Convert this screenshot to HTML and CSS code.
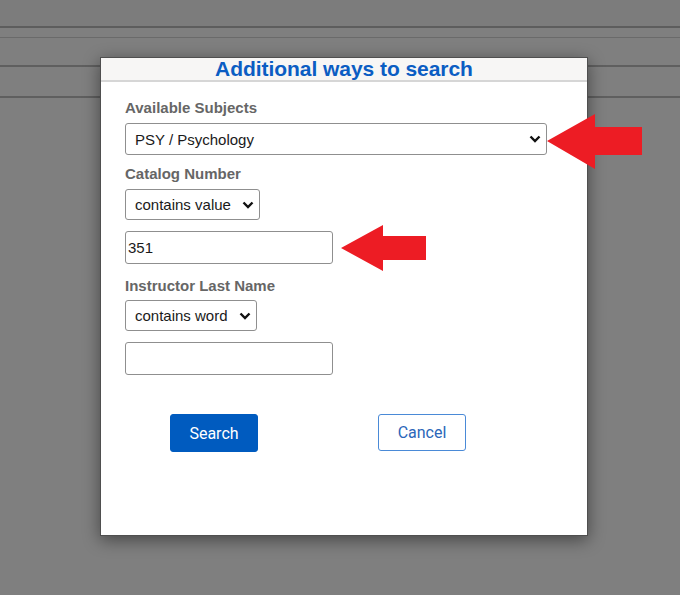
FILE: index.html
```html
<!DOCTYPE html>
<html>
<head>
<meta charset="utf-8">
<link rel="stylesheet" href="styles.css">
</head>
<body>
<div class="page">
  <div class="band band-top"></div>
  <div class="band band-thin"></div>
  <div class="band band-mid"></div>
  <div class="band band-low"></div>
</div>

<div class="modal">
  <div class="modal-header">Additional ways to search</div>
  <div class="modal-body">
    <label class="field-label">Available Subjects</label>
    <div class="select-wrap subject">
      <select class="select"><option>PSY / Psychology</option></select>
      <svg class="chev" viewBox="0 0 12 8"><path d="M1.5 1.5 L6 6 L10.5 1.5" fill="none" stroke="#111" stroke-width="2.4"/></svg>
    </div>

    <label class="field-label gap-top">Catalog Number</label>
    <div class="select-wrap op-value">
      <select class="select"><option>contains value</option></select>
      <svg class="chev" viewBox="0 0 12 8"><path d="M1.5 1.5 L6 6 L10.5 1.5" fill="none" stroke="#111" stroke-width="2.4"/></svg>
    </div>
    <input class="text-input" type="text" value="351">

    <label class="field-label gap-top2 tight">Instructor Last Name</label>
    <div class="select-wrap op-word">
      <select class="select"><option>contains word</option></select>
      <svg class="chev" viewBox="0 0 12 8"><path d="M1.5 1.5 L6 6 L10.5 1.5" fill="none" stroke="#111" stroke-width="2.4"/></svg>
    </div>
    <input class="text-input" type="text" value="">

    <div class="actions">
      <button class="btn btn-primary">Search</button>
      <button class="btn btn-outline">Cancel</button>
    </div>
  </div>
</div>

<svg class="annotations" width="680" height="595" viewBox="0 0 680 595">
  <polygon fill="#ed1c24" points="547,141 595,114 595,127 642,127 642,155 595,155 595,169"/>
  <polygon fill="#ed1c24" points="341,248 383,225 383,236 426,236 426,260 383,260 383,271"/>
</svg>
</body>
</html>
```

FILE: styles.css
```css
html, body {
  margin: 0;
  padding: 0;
}
body {
  width: 680px;
  height: 595px;
  overflow: hidden;
  background: #7f7f7f;
  font-family: "Liberation Sans", Arial, sans-serif;
  position: relative;
}
.page {
  display: flex;
  flex-direction: column;
}
.band {
  box-sizing: border-box;
}
.band-top {
  height: 28px;
  border-bottom: 2px solid #5d5d5d;
  background: #7c7c7c;
}
.band-thin {
  height: 10px;
  border-bottom: 1px solid #6a6a6a;
}
.band-mid {
  height: 29px;
  border-bottom: 2px solid #5f5f5f;
}
.band-low {
  height: 31px;
  border-bottom: 2px solid #5f5f5f;
}

.modal {
  position: absolute;
  left: 100px;
  top: 57px;
  width: 488px;
  height: 479px;
  box-sizing: border-box;
  background: #fff;
  border: 1px solid #4f4f4f;
  box-shadow: 0 4px 16px rgba(0, 0, 0, 0.45);
}
.modal-header {
  height: 22px;
  line-height: 22px;
  background: #f7f6f5;
  border-bottom: 2px solid #d6d6d6;
  text-align: center;
  font-weight: bold;
  font-size: 21px;
  color: #0b5dc3;
  letter-spacing: -0.05px;
}
.modal-body {
  padding: 17px 0 0 24px;
  display: flex;
  flex-direction: column;
  align-items: flex-start;
}
.field-label {
  display: block;
  font-size: 15px;
  line-height: 18px;
  font-weight: bold;
  color: #666;
  margin-bottom: 6px;
}
.gap-top {
  margin-top: 10px;
}
.gap-top2 {
  margin-top: 13px;
}
.field-label.tight {
  margin-bottom: 5px;
}
.select-wrap {
  position: relative;
  height: 31px;
}
.select-wrap.subject { width: 422px; height: 32px; }
.select-wrap.op-value { width: 135px; }
.select-wrap.op-word { width: 132px; }
.select {
  -webkit-appearance: none;
  appearance: none;
  width: 100%;
  height: 100%;
  box-sizing: border-box;
  border: 1px solid #8f8f8f;
  border-radius: 3px;
  background: #fff;
  font-family: "Liberation Sans", Arial, sans-serif;
  font-size: 15px;
  color: #1a1a1a;
  padding: 0 0 0 9px;
  margin: 0;
}
.chev {
  position: absolute;
  width: 12px;
  height: 8px;
  right: 6px;
  top: 50%;
  margin-top: -4px;
  pointer-events: none;
}
.text-input {
  box-sizing: border-box;
  width: 208px;
  height: 33px;
  margin: 11px 0 0 0;
  border: 1px solid #8f8f8f;
  border-radius: 3px;
  padding: 0 2px;
  font-family: "Liberation Sans", Arial, sans-serif;
  font-size: 15px;
  color: #1a1a1a;
  background: #fff;
}
.actions {
  display: flex;
  gap: 120px;
  margin: 39px 0 0 45px;
}
.btn {
  box-sizing: border-box;
  width: 88px;
  height: 38px;
  border-radius: 3px;
  font-family: Roboto, "Liberation Sans", sans-serif;
  font-size: 16px;
  padding: 0;
  margin: 0;
}
.btn-primary {
  background: #005bbf;
  border: 1px solid #005bbf;
  color: #fff;
}
.btn-outline {
  height: 37px;
  background: #fff;
  border: 1px solid #4a8ad7;
  color: #2b66b9;
}
.annotations {
  position: absolute;
  left: 0;
  top: 0;
  pointer-events: none;
}
```
